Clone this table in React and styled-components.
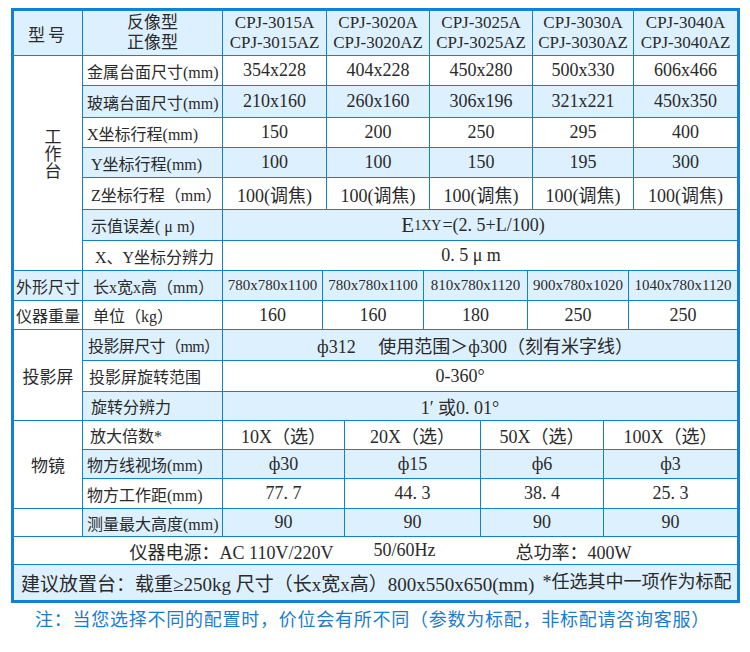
import React from 'react';
import styled, { createGlobalStyle } from 'styled-components';

const LINE = '#1380d4';
const TINT = '#ddf0fd';
const WHITE = '#ffffff';
const INK = '#2a2a2a';

const Global = createGlobalStyle`
  html, body { margin: 0; padding: 0; background: #fff; }
  body {
    font-family: "Liberation Serif", "Noto Sans CJK SC", serif;
    color: ${INK};
  }
`;

const Page = styled.div`
  width: 750px;
  height: 652px;
  overflow: hidden;
`;

const Sheet = styled.div`
  box-sizing: border-box;
  width: 729px;
  margin: 8px 0 0 11px;
  border: 3px solid ${LINE};
  background: ${LINE};
  display: flex;
  flex-direction: column;
  gap: 1px;
`;

const Row = styled.div`
  --row-bg: ${p => (p.$tint ? TINT : WHITE)};
  display: grid;
  grid-template-columns: ${p => p.$cols};
  gap: 1px;
  height: ${p => p.$h}px;
`;

const Section = styled.div`
  display: grid;
  grid-template-columns: 68px 1fr;
  gap: 1px;
`;

const Stack = styled.div`
  display: flex;
  flex-direction: column;
  gap: 1px;
`;

const GroupLabel = styled.div`
  background: ${p => (p.$tint ? TINT : WHITE)};
  display: flex;
  align-items: center;
  justify-content: center;
  font-size: 17px;
  padding-bottom: ${p => p.$lift || 0}px;
  ${p => p.$vertical && `
    writing-mode: vertical-rl;
    text-orientation: upright;
    line-height: 1;
    padding-left: 6px;
  `}
`;

const Cell = styled.div`
  background: ${p => (p.$plain ? WHITE : 'var(--row-bg)')};
  display: flex;
  align-items: center;
  justify-content: center;
  font-size: ${p => p.$size || 18}px;
  letter-spacing: ${p => p.$track || 0}px;
  padding-right: ${p => p.$pr || 0}px;
  white-space: nowrap;
  overflow: hidden;
`;

const Name = styled(Cell)`
  justify-content: flex-start;
  font-size: 16px;
  padding-left: ${p => p.$indent ?? 4}px;
`;

const HeadCell = styled(Cell)`
  flex-direction: column;
  line-height: 20px;
  font-size: 17px;
`;

const Big = styled.span`
  font-size: 21px;
`;

const Sub = styled.span`
  font-size: 14px;
  margin-right: 1px;
  align-self: flex-end;
  padding-bottom: 6px;
`;

const Line = styled(Cell)`
  padding-left: 10px;
`;

const Piece = styled.span`
  margin-left: ${p => p.$gap || 0}px;
`;

const Advice = styled(Cell)`
  justify-content: flex-start;
  padding-left: 7px;
  font-size: 19px;
`;

const Aside = styled.span`
  margin-left: 8px;
  align-self: flex-start;
  padding-top: 2px;
  font-size: 18px;
`;

const Note = styled.div`
  padding: 3px 0 0 35px;
  font-family: "Noto Sans CJK SC", "Noto Sans", sans-serif;
  font-size: 18px;
  letter-spacing: 0.75px;
  line-height: 24px;
  color: #1c7ccc;
`;

const HEADER = '68px 139px 103px 102px 102px 100px 103px';
const MAIN = '139px 103px 102px 102px 100px 103px';
const WIDE = '139px 1fr';
const OUTER = '68px 139px 99px 100px 103px 100px 108px';
const OBJ = '139px 121px 135px 122px 133px';

const models = [
  ['CPJ-3015A', 'CPJ-3015AZ'],
  ['CPJ-3020A', 'CPJ-3020AZ'],
  ['CPJ-3025A', 'CPJ-3025AZ'],
  ['CPJ-3030A', 'CPJ-3030AZ'],
  ['CPJ-3040A', 'CPJ-3040AZ'],
];

const stageRows = [
  { name: '金属台面尺寸(mm)', vals: ['354x228', '404x228', '450x280', '500x330', '606x466'], h: 29 },
  { name: '玻璃台面尺寸(mm)', vals: ['210x160', '260x160', '306x196', '321x221', '450x350'], h: 31, tint: true },
  { name: 'X坐标行程(mm)', vals: ['150', '200', '250', '295', '400'], h: 29 },
  { name: 'Y坐标行程(mm)', vals: ['100', '100', '150', '195', '300'], h: 29, tint: true, indent: 8 },
  { name: 'Z坐标行程（mm）', vals: Array(5).fill('100(调焦)'), h: 31, indent: 8 },
];

const objRows = [
  { name: '放大倍数*', vals: ['10X（选）', '20X（选）', '50X（选）', '100X（选）'], h: 28, indent: 7 },
  { name: '物方线视场(mm)', vals: ['ф30', 'ф15', 'ф6', 'ф3'], h: 28, tint: true },
  { name: '物方工作距(mm)', vals: ['77. 7', '44. 3', '38. 4', '25. 3'], h: 29 },
];

function ValueRow({ cols, h, tint, name, indent, vals, size }) {
  return (
    <Row $cols={cols} $h={h} $tint={tint}>
      <Name $indent={indent}>{name}</Name>
      {vals.map((v, i) => (
        <Cell key={i} $size={size}>{v}</Cell>
      ))}
    </Row>
  );
}

export default function App() {
  return (
    <Page>
      <Global />
      <Sheet>
        <Row $cols={HEADER} $h={44} $tint>
          <Cell $size={17} $track={3}>型号</Cell>
          <HeadCell>
            <span>反像型</span>
            <span>正像型</span>
          </HeadCell>
          {models.map(m => (
            <HeadCell key={m[0]}>
              <span>{m[0]}</span>
              <span>{m[1]}</span>
            </HeadCell>
          ))}
        </Row>

        <Section>
          <GroupLabel $vertical $lift={20}>工作台</GroupLabel>
          <Stack>
            {stageRows.map(r => (
              <ValueRow key={r.name} cols={MAIN} {...r} />
            ))}
            <Row $cols={WIDE} $h={30} $tint>
              <Name $indent={8}>示值误差( μ m)</Name>
              <Cell $pr={14}>
                <Big>E</Big>
                <Sub>1XY</Sub>
                <span>=(2. 5+L/100)</span>
              </Cell>
            </Row>
            <Row $cols={WIDE} $h={29}>
              <Name $indent={12}>X、Y坐标分辨力</Name>
              <Cell $pr={18}>0. 5 μ m</Cell>
            </Row>
          </Stack>
        </Section>

        <Row $cols={OUTER} $h={29} $tint>
          <Cell $size={16}>外形尺寸</Cell>
          <Name $indent={10}>长x宽x高（mm）</Name>
          {['780x780x1100', '780x780x1100', '810x780x1120', '900x780x1020', '1040x780x1120'].map((v, i) => (
            <Cell key={i} $size={15}>{v}</Cell>
          ))}
        </Row>
        <Row $cols={OUTER} $h={28}>
          <Cell $size={16}>仪器重量</Cell>
          <Name $indent={10}>单位（kg）</Name>
          {['160', '160', '180', '250', '250'].map((v, i) => (
            <Cell key={i}>{v}</Cell>
          ))}
        </Row>

        <Section>
          <GroupLabel>投影屏</GroupLabel>
          <Stack>
            <Row $cols={WIDE} $h={30} $tint>
              <Name $indent={5} $track={-0.6}>投影屏尺寸（mm）</Name>
              <Cell $pr={10}>ф312&nbsp;&nbsp;&nbsp;&nbsp;&nbsp;使用范围＞ф300（刻有米字线）</Cell>
            </Row>
            <Row $cols={WIDE} $h={30}>
              <Name $indent={6}>投影屏旋转范围</Name>
              <Cell $pr={40}>0-360°</Cell>
            </Row>
            <Row $cols={WIDE} $h={28} $tint>
              <Name $indent={8}>旋转分辨力</Name>
              <Cell $pr={40}>1′ 或0. 01°</Cell>
            </Row>
          </Stack>
        </Section>

        <Section>
          <GroupLabel>物镜</GroupLabel>
          <Stack>
            {objRows.map(r => (
              <ValueRow key={r.name} cols={OBJ} {...r} />
            ))}
          </Stack>
        </Section>
        <Row $cols={'68px ' + OBJ} $h={27} $tint>
          <Cell $plain />
          <Name>测量最大高度(mm)</Name>
          {['90', '90', '90', '90'].map((v, i) => (
            <Cell key={i}>{v}</Cell>
          ))}
        </Row>

        <Row $cols="1fr" $h={27}>
          <Line>
            <Piece>仪器电源：AC 110V/220V</Piece>
            <Piece $gap={40}>50/60Hz</Piece>
            <Piece $gap={80}>总功率：400W</Piece>
          </Line>
        </Row>
        <Row $cols="1fr" $h={35} $tint>
          <Advice>
            <span>建议放置台：载重≥250kg 尺寸（长x宽x高）800x550x650(mm)</span>
            <Aside>*任选其中一项作为标配</Aside>
          </Advice>
        </Row>
      </Sheet>
      <Note>注：当您选择不同的配置时，价位会有所不同（参数为标配，非标配请咨询客服）</Note>
    </Page>
  );
}
